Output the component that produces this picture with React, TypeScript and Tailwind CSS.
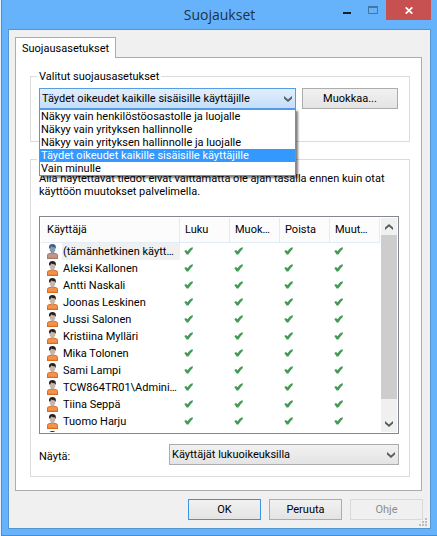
import { useState } from 'react';

const LEVELS = [
  'Näkyy vain henkilöstöosastolle ja luojalle',
  'Näkyy vain yrityksen hallinnolle',
  'Näkyy vain yrityksen hallinnolle ja luojalle',
  'Täydet oikeudet kaikille sisäisille käyttäjille',
  'Vain minulle',
];

const USERS = [
  '(tämänhetkinen käyttäjä)',
  'Aleksi Kallonen',
  'Antti Naskali',
  'Joonas Leskinen',
  'Jussi Salonen',
  'Kristiina Mylläri',
  'Mika Tolonen',
  'Sami Lampi',
  'TCW864TR01\\Administrator',
  'Tiina Seppä',
  'Tuomo Harju',
  '',
];

const RIGHTS = ['Luku', 'Muokkaus', 'Poista', 'Muuta oikeuksia'];

function Chevron({ up = false }: { up?: boolean }) {
  return (
    <svg width="8" height="6" viewBox="0 0 8 6" className={up ? 'rotate-180' : ''} aria-hidden="true">
      <path d="M0 0L4 3.4L8 0V2.4L4 6L0 2.4Z" fill="#555b63" />
    </svg>
  );
}

function Person({ current }: { current: boolean }) {
  const shirt = current ? '#c29682' : '#f4924a';
  const shirtEdge = current ? '#a87c69' : '#dc6d20';
  return (
    <svg width="11" height="15" viewBox="0 0 11 15" className="block" aria-hidden="true">
      <path d="M0 15V11.4Q0 9.6 1.8 9.2L4 8.8H7L9.2 9.2Q11 9.6 11 11.4V15Z" fill={shirtEdge} />
      <path d="M1 13.8V11.6Q1 10.4 2.4 10.1L4 9.8H7L8.6 10.1Q10 10.4 10 11.6V13.8Z" fill={shirt} />
      <path d="M4 7H7V9.6L5.5 10.6L4 9.6Z" fill={current ? '#8496a8' : '#a99b90'} />
      <path d="M2.8 3H8.2V6.4Q7.6 8.8 5.5 9Q3.4 8.8 2.8 6.4Z" fill={current ? '#849cb4' : '#c4b8ae'} />
      <path
        d="M2.2 4.4Q1.4 1 3.8 0.3Q6.6 -0.3 8.2 0.9Q9.2 2.2 8.7 4.4L8 4.4L7.7 3.2Q5.5 3.6 4.4 2.6L3 4.4Z"
        fill={current ? '#3f5f80' : '#26211f'}
      />
    </svg>
  );
}

function Check() {
  return (
    <svg width="9" height="8" viewBox="0 0 9 8" className="block" role="img" aria-label="Kyllä">
      <path d="M0.3 4L2 3.1L3.5 4.3Q5.6 1.2 8.6 0.1L8.8 2Q6.2 4.2 4.4 7.6H2.6Z" fill="#459a58" />
    </svg>
  );
}

const button =
  'h-[21px] border border-[#acacac] bg-linear-to-b from-[#f1f1f1] to-[#e4e4e4] text-center leading-[13px]';

export default function App() {
  const [level, setLevel] = useState(LEVELS[3]);
  const [open, setOpen] = useState(true);

  return (
    <div className="bg-[#e8f4ff] pl-px font-['Roboto','Liberation_Sans',sans-serif] text-[11px] leading-[13px] text-black">
      <div className="border-b border-l border-[#4390d8] bg-[#66b2fb] px-[6px] pb-[6px]">
        {/* Title bar */}
        <div className="grid h-[29px] grid-cols-[1fr_auto_1fr] items-start">
          <span />
          <h1 className="pt-[3px] font-['Open_Sans',sans-serif] text-[14px] leading-6 text-[#1d3247]">Suojaukset</h1>
          <div className="flex justify-end">
            <button type="button" aria-label="Pienennä" className="flex h-[19px] w-[26px] items-center justify-center">
              <svg width="8" height="2" className="mt-[7px]">
                <rect width="8" height="2" fill="#15202b" />
              </svg>
            </button>
            <button type="button" aria-label="Suurenna" className="flex h-[19px] w-[26px] items-center justify-center">
              <svg width="10" height="8" viewBox="0 0 10 8">
                <path d="M0.5 1V7.5H9.5V1" fill="none" stroke="#44779f" />
                <path d="M0 1H10" stroke="#44779f" strokeWidth="2" />
              </svg>
            </button>
            <button
              type="button"
              aria-label="Sulje"
              className="flex h-5 w-[45px] items-center justify-center bg-[#c75050]"
            >
              <svg width="8" height="7" viewBox="0 0 8 7">
                <path d="M0.7 0.3L7.3 6.7M7.3 0.3L0.7 6.7" stroke="#fff" strokeWidth="1.7" />
              </svg>
            </button>
          </div>
        </div>

        <div className="relative border border-[#5596d0] bg-[#f0f0f0] pt-[7px] pr-[7px] pb-2 pl-[6px]">
          <button
            type="button"
            role="tab"
            aria-selected="true"
            className="relative z-10 -mb-px block h-[21px] w-[101px] border border-b-0 border-[#acacac] bg-white px-[6px] text-left"
          >
            Suojausasetukset
          </button>

          <div className="mr-px border border-[#acacac] bg-white pt-3 pr-[11px] pb-[13px] pl-[14px]">
            <fieldset className="min-w-0 border border-[#dcdcdc] pt-[5px] pr-[11px] pb-8 pl-2">
              <legend className="-ml-[2px] px-[2px]">Valitut suojausasetukset</legend>
              <div className="flex gap-[6px]">
                <div className="relative min-w-0 flex-1">
                  <select
                    aria-label="Suojausasetus"
                    value={level}
                    onChange={(e) => setLevel(e.target.value)}
                    className="block h-[21px] w-full appearance-none border border-[#569de5] bg-linear-to-b from-[#e2eefc] to-[#c4defa] pr-4 pl-[2px]"
                  >
                    {LEVELS.map((l) => (
                      <option key={l}>{l}</option>
                    ))}
                  </select>
                  <span className="pointer-events-none absolute top-2 right-1">
                    <Chevron />
                  </span>
                  {open && (
                    <ul
                      role="listbox"
                      aria-label="Suojausasetukset"
                      className="absolute inset-x-0 top-full z-20 border border-[#7d8fa3] bg-white shadow-[2px_2px_2px_rgba(0,0,0,0.5)]"
                    >
                      {LEVELS.map((l) => (
                        <li
                          key={l}
                          role="option"
                          aria-selected={l === level}
                          onClick={() => {
                            setLevel(l);
                            setOpen(false);
                          }}
                          className={`px-px whitespace-nowrap ${l === level ? 'bg-[#3399ff] text-white' : ''}`}
                        >
                          {l}
                        </li>
                      ))}
                    </ul>
                  )}
                </div>
                <button type="button" className={`${button} w-24`}>
                  Muokkaa...
                </button>
              </div>
            </fieldset>

            <fieldset className="mt-[11px] min-w-0 border border-[#dcdcdc] pt-[6px] pr-[10px] pb-[11px] pl-2">
              <legend className="-ml-[2px] h-[13px] w-24" />
              <p className="pr-2">
                Alla näytettävät tiedot eivät välttämättä ole ajan tasalla ennen kuin otat käyttöön muutokset
                palvelimella.
              </p>

              {/* User list */}
              <div className="mt-[18px] flex h-[218px] border border-[#828790] p-px">
                <div className="min-w-0 flex-1 overflow-hidden">
                  <table className="w-full table-fixed border-collapse text-left">
                    <thead>
                      <tr className="h-6 border-b border-[#e3edf7] bg-[#fcfcfd]">
                        <th className="border-r border-[#e0ebf6] pl-[6px] font-normal">Käyttäjä</th>
                        {RIGHTS.map((r) => (
                          <th
                            key={r}
                            className="w-[50px] truncate border-r border-[#e0ebf6] pr-[7px] pl-[5px] font-normal"
                          >
                            {r}
                          </th>
                        ))}
                      </tr>
                    </thead>
                    <tbody>
                      {USERS.map((user, i) => (
                        <tr key={i} className="h-[17px]">
                          <td className="p-0">
                            <div className="flex h-[17px] items-center gap-1 pl-[6px]">
                              <Person current={i === 0} />
                              <span
                                className={`min-w-0 flex-1 truncate pr-[2px] pl-px leading-[17px] ${i === 0 ? 'bg-[#f0f0f0]' : ''}`}
                              >
                                {user}
                              </span>
                            </div>
                          </td>
                          {RIGHTS.map((r) => (
                            <td key={r} className="py-0 pl-1">
                              {user && <Check />}
                            </td>
                          ))}
                        </tr>
                      ))}
                    </tbody>
                  </table>
                </div>
                <div className="ml-px flex w-4 flex-col bg-[#f0f0f0]">
                  <button type="button" aria-label="Vieritä ylös" className="flex h-[17px] items-center justify-center">
                    <Chevron up />
                  </button>
                  <div className="flex-1">
                    <div className="h-[91%] bg-[#cdcdcd]" />
                  </div>
                  <button
                    type="button"
                    aria-label="Vieritä alas"
                    className="flex h-[17px] items-center justify-center"
                  >
                    <Chevron />
                  </button>
                </div>
              </div>

              <div className="mt-[10px] flex items-center">
                <label htmlFor="show" className="w-[130px] pt-1">
                  Näytä:
                </label>
                <div className="relative flex-1">
                  <select
                    id="show"
                    className="block h-[21px] w-full appearance-none border border-[#acacac] bg-linear-to-b from-[#f1f1f1] to-[#e4e4e4] pr-4 pl-[2px]"
                  >
                    <option>Käyttäjät lukuoikeuksilla</option>
                  </select>
                  <span className="pointer-events-none absolute top-2 right-1">
                    <Chevron />
                  </span>
                </div>
              </div>
            </fieldset>
          </div>

          <div className="mt-2 flex justify-end gap-2">
            <button
              type="button"
              className="h-[21px] w-[73px] border border-[#3c94e0] bg-linear-to-b from-[#f1f1f1] to-[#e4e4e4]"
            >
              OK
            </button>
            <button type="button" className={`${button} w-[73px]`}>
              Peruuta
            </button>
            <button type="button" disabled className="h-[21px] w-[73px] border border-[#d9d9d9] text-[#8c8c8c]">
              Ohje
            </button>
          </div>

          <svg width="8" height="8" className="absolute right-[3px] bottom-[2px]" fill="#bdbdbd" aria-hidden="true">
            <path d="M6 0h2v2h-2zM3 3h2v2h-2zM6 3h2v2h-2zM0 6h2v2h-2zM3 6h2v2h-2zM6 6h2v2h-2z" />
          </svg>
        </div>
      </div>
    </div>
  );
}
